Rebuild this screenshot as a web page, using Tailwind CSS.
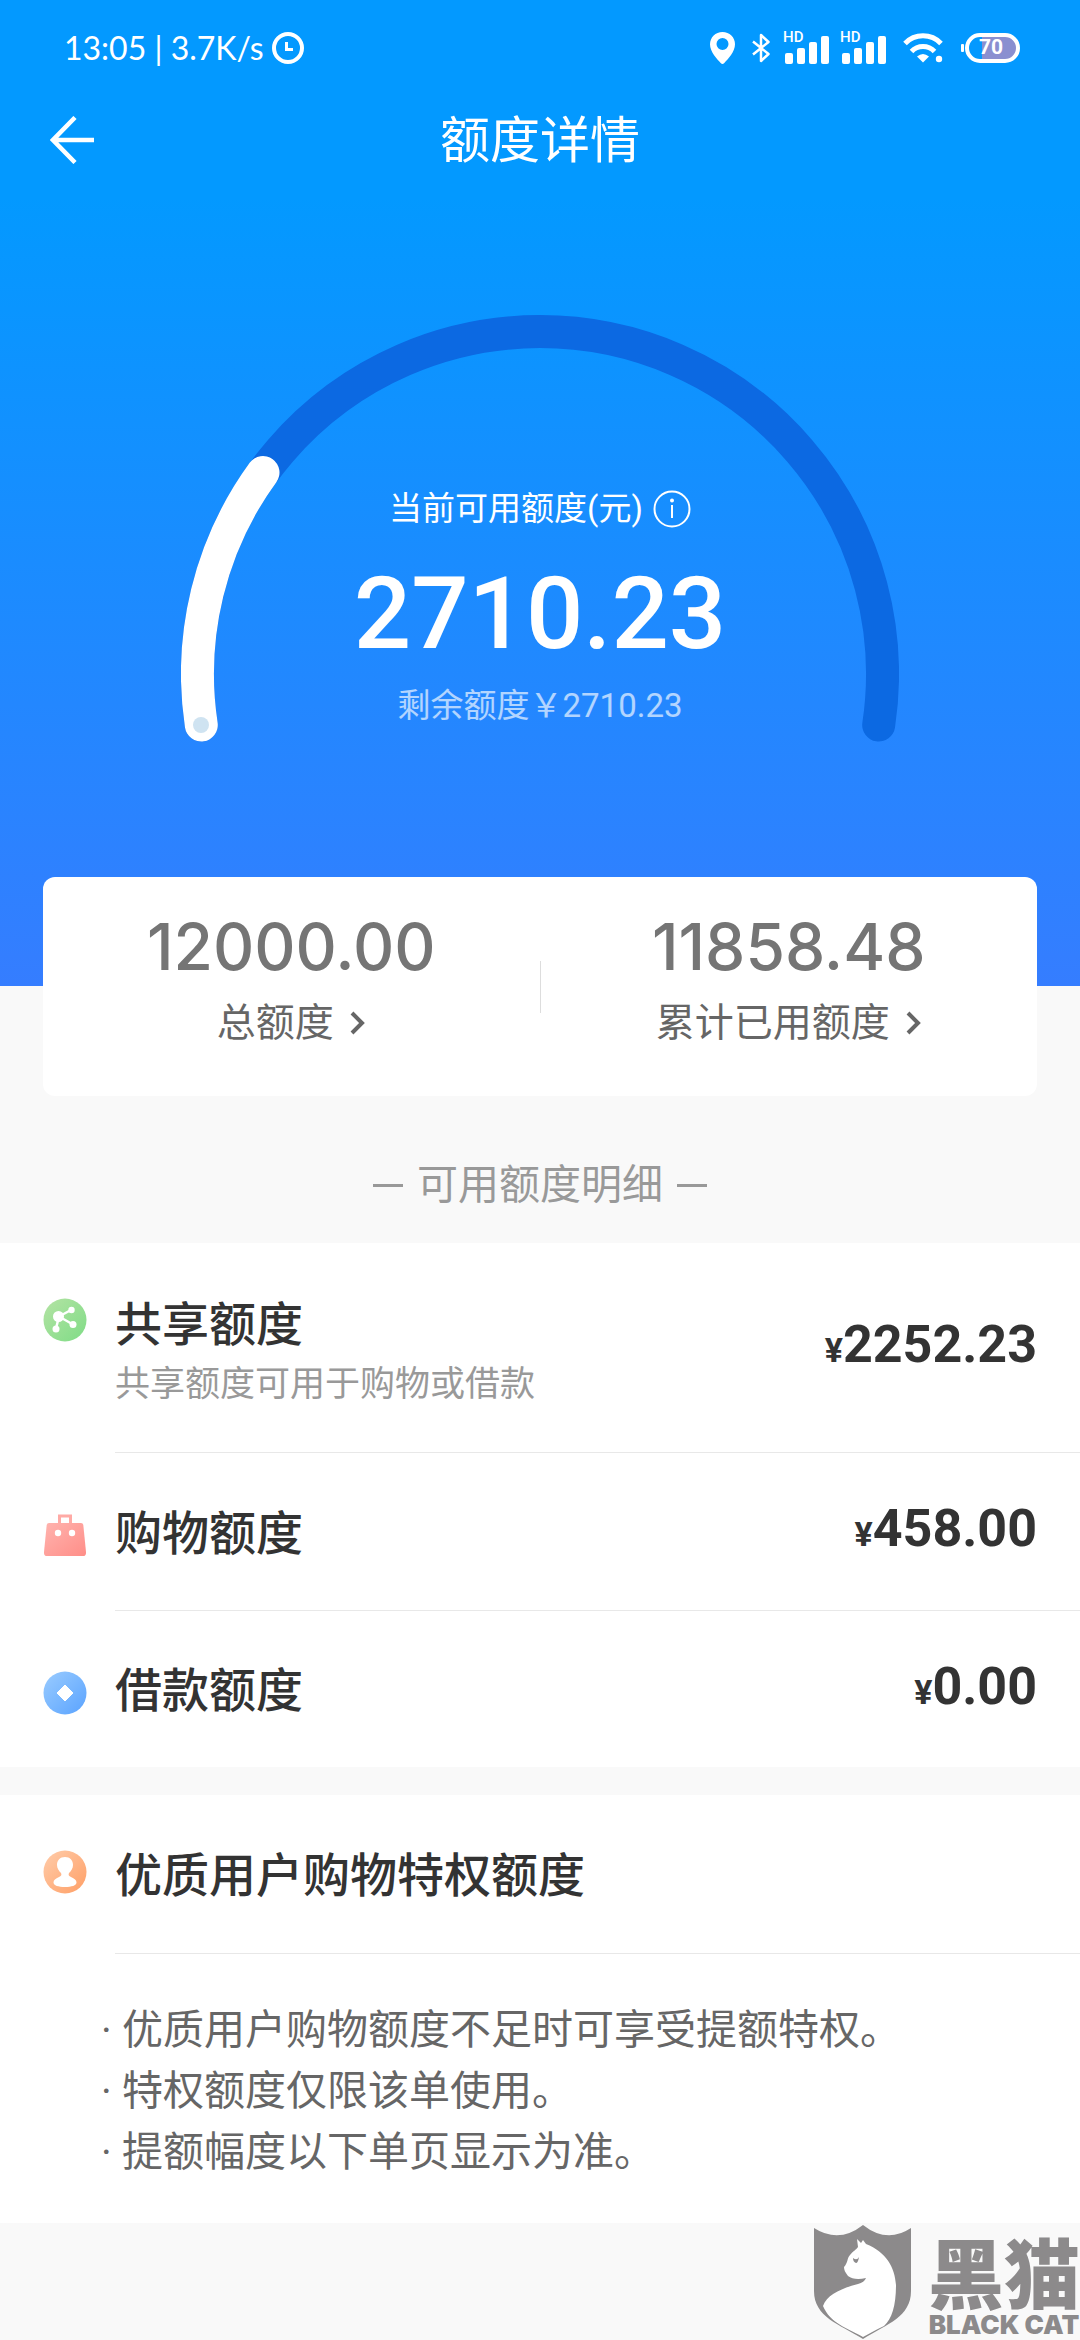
<!DOCTYPE html>
<html lang="zh-CN">
  <head>
    <meta charset="UTF-8" />
    <meta name="viewport" content="width=device-width, initial-scale=1.0" />
    <title>额度详情</title>
    <script src="https://cdn.jsdelivr.net/npm/@tailwindcss/browser@4"></script>
  </head>
  <body class="relative min-h-screen bg-[#f9f9f9] font-['Roboto','Noto_Sans_CJK_SC',sans-serif] text-[#333]">

    <header class="bg-linear-to-b/srgb from-[#0399ff] from-20% to-[#357dff] pb-[242px] text-white">
      <!-- 状态栏 -->
      <div class="flex h-[95px] items-center justify-between pl-16 pr-[60px]">
        <div class="flex items-center gap-2 font-['Lato',sans-serif] text-[32px] leading-none">
          <span>13:05 | 3.7K/s</span>
          <svg class="size-8" viewBox="0 0 32 32" fill="none" stroke="currentColor">
            <circle cx="16" cy="16" r="14" stroke-width="4" />
            <path d="M14.5 10v7.5H21" stroke-width="3" />
          </svg>
        </div>
        <div class="flex items-center">
          <svg class="mr-[17px] h-8 w-[25px]" viewBox="0 0 25 32" fill="currentColor">
            <path fill-rule="evenodd" d="M12.500 0C5.500 0 0 5.400 0 12.300 0 20 7 27 10.700 31a2.500 2.500 0 0 0 3.600 0C18 27 25 20 25 12.300 25 5.400 19.500 0 12.500 0zM12.500 6a6 6 0 1 1 0 12 6 6 0 0 1 0-12z" />
          </svg>
          <svg class="mr-[13px] h-[30px] w-[18px]" viewBox="0 0 18 30" fill="none" stroke="currentColor" stroke-width="2.500" stroke-linejoin="round">
            <path d="M1 8.500 16.500 21 9 28V2l7.500 7L1 21.500" />
          </svg>
          <svg class="mr-[11px] h-[42px] w-[46px]" viewBox="0 -4 46 42" fill="currentColor">
            <text x="0" y="11" font-size="15" font-weight="500">HD</text>
            <rect x="2" y="22" width="8" height="11" rx="2" />
            <rect x="14" y="17" width="8" height="16" rx="2" />
            <rect x="26" y="11" width="8" height="22" rx="2" />
            <rect x="38" y="5" width="8" height="28" rx="2" />
          </svg>
          <svg class="mr-[17px] h-[42px] w-[46px]" viewBox="0 -4 46 42" fill="currentColor">
            <text x="0" y="11" font-size="15" font-weight="500">HD</text>
            <rect x="2" y="22" width="8" height="11" rx="2" />
            <rect x="14" y="17" width="8" height="16" rx="2" />
            <rect x="26" y="11" width="8" height="22" rx="2" />
            <rect x="38" y="5" width="8" height="28" rx="2" />
          </svg>
          <svg class="mr-[18px] h-[30px] w-10" viewBox="0 0 40 30" fill="none" stroke="currentColor" stroke-width="5">
            <path d="M2 10.500a25 25 0 0 1 36 0" />
            <path d="M8.500 18.500a16 16 0 0 1 23 0" />
            <path d="M14 23.500q6-5 12 0L20 29.500z" fill="currentColor" stroke="none" />
            <circle cx="36" cy="26" r="3.200" fill="currentColor" stroke="none" />
          </svg>
          <svg class="h-[30px] w-[59px]" viewBox="0 0 59 30">
            <rect x="0" y="11" width="3" height="8" rx="1" fill="#fff" />
            <rect x="6" y="2" width="51" height="26" rx="13" fill="#0399ff" />
            <path d="M21 2h23a13 13 0 0 1 0 26H21z" fill="#8a8fd0" />
            <rect x="6" y="2" width="51" height="26" rx="13" fill="none" stroke="#fff" stroke-width="4" />
            <text x="30" y="21" font-size="21" font-weight="700" text-anchor="middle" fill="#fff">70</text>
          </svg>
        </div>
      </div>

      <!-- 标题栏 -->
      <nav class="grid h-[90px] grid-cols-[1fr_auto_1fr] items-center px-[50px]">
        <button type="button" aria-label="返回" class="w-11 cursor-pointer">
          <svg class="h-12 w-11" viewBox="0 0 44 48" fill="none" stroke="currentColor" stroke-width="4.500">
            <path d="M25 1.500 3 24l22 22.500M2.500 24H44" />
          </svg>
        </button>
        <h1 class="pt-0.5 text-[50px] leading-none">额度详情</h1>
      </nav>

      <!-- 额度仪表盘 -->
      <div class="mx-auto mt-[130px] grid w-[718px] justify-items-center">
        <svg class="col-start-1 row-start-1 h-[429px] w-[718px]" viewBox="181 315 718 429" fill="none" stroke-width="33" stroke-linecap="round">
          <path d="M201.300 725A342.500 342.500 0 1 1 878.700 725" stroke="#0c69e2" />
          <path d="M201.300 725A342.500 342.500 0 0 1 263 472.500" stroke="#fff" />
          <circle cx="201" cy="725" r="8" fill="#cfe3f1" />
        </svg>
        <div class="col-start-1 row-start-1 flex flex-col items-center pt-[173px]">
          <div class="flex items-center gap-2.5 text-[33px] leading-[42px]">
            <span>当前可用额度(元)</span>
            <button type="button" aria-label="说明" class="cursor-pointer">
              <svg class="size-[38px]" viewBox="0 0 38 38" fill="none" stroke="currentColor" stroke-width="2">
                <circle cx="19" cy="19" r="17.500" />
                <path d="M19 15v13" />
                <circle cx="19" cy="10.500" r="2" fill="currentColor" stroke="none" />
              </svg>
            </button>
          </div>
          <p class="mt-[34px] text-[101px] leading-[100px] font-medium">2710.23</p>
          <p class="mt-[21px] text-[33px] leading-[42px] text-white/65">剩余额度￥2710.23</p>
        </div>
      </div>
    </header>

    <!-- 总额度 / 已用额度 -->
    <section class="relative mx-[43px] -mt-[109px] flex h-[219px] items-center rounded-xl bg-white text-[#666]">
      <a href="#" class="flex flex-1 flex-col items-center gap-4 pb-2">
        <span class="font-['Inter',sans-serif] text-[64px] leading-[64px] font-medium text-[#757575]">12000.00</span>
        <span class="flex items-center gap-4 text-[39px] leading-[56px]">总额度
          <svg class="h-6 w-4" viewBox="0 0 16 24" fill="none" stroke="currentColor" stroke-width="4"><path d="M2 2l10 10L2 22" /></svg>
        </span>
      </a>
      <span class="h-[52px] w-px bg-[#ddd]"></span>
      <a href="#" class="flex flex-1 flex-col items-center gap-4 pb-2">
        <span class="font-['Inter',sans-serif] text-[64px] leading-[64px] font-medium text-[#757575]">11858.48</span>
        <span class="flex items-center gap-4 text-[39px] leading-[56px]">累计已用额度
          <svg class="h-6 w-4" viewBox="0 0 16 24" fill="none" stroke="currentColor" stroke-width="4"><path d="M2 2l10 10L2 22" /></svg>
        </span>
      </a>
    </section>

    <h2 class="flex h-[147px] items-center justify-center gap-[14px] pt-8 text-[41px] text-[#999]">
      <span class="h-[3px] w-[30px] bg-[#999]"></span>可用额度明细<span class="h-[3px] w-[30px] bg-[#999]"></span>
    </h2>

    <!-- 可用额度明细 -->
    <ul class="bg-white pl-[43px]">
      <li class="flex">
        <svg class="mt-[55px] mr-7 size-11 shrink-0" viewBox="0 0 44 44">
          <defs><linearGradient id="green" x1="0" y1="0" x2="1" y2="1"><stop stop-color="#b4e3a4" /><stop offset="1" stop-color="#7fdc86" /></linearGradient></defs>
          <circle cx="22" cy="22" r="21.500" fill="url(#green)" />
          <path d="M28 12 16 18.500l-3 12M16 18.500l14 8" fill="none" stroke="#fff" stroke-width="2.500" />
          <g fill="#fff"><circle cx="15.500" cy="18.500" r="5.500" /><circle cx="28.500" cy="12" r="3.200" /><circle cx="13" cy="31" r="3.500" /><circle cx="30" cy="26.500" r="3.500" /></g>
        </svg>
        <div class="flex h-[210px] flex-1 items-start justify-between border-b border-[#e8e8e8] pt-[52px] pr-[43px]">
          <div>
            <h3 class="text-[47px] leading-[60px] font-medium">共享额度</h3>
            <p class="text-[35px] leading-[60px] text-[#999]">共享额度可用于购物或借款</p>
          </div>
          <p class="pt-5 text-[52px] leading-[60px] font-bold"><span class="text-[34px]">¥</span>2252.23</p>
        </div>
      </li>
      <li class="flex">
        <svg class="mt-[60px] mr-7 size-11 shrink-0" viewBox="0 0 44 44">
          <defs><linearGradient id="red" x1="0" y1="0" x2="1" y2="1"><stop stop-color="#ffb3ae" /><stop offset="1" stop-color="#ff8e88" /></linearGradient></defs>
          <path d="M16.500 11V3h11v8" fill="none" stroke="#ffaaa5" stroke-width="3" />
          <path d="M6 10h32q2 0 2.300 2L43 39q.300 4-3 4H4q-3.300 0-3-4l2.700-27Q4 10 6 10z" fill="url(#red)" />
          <circle cx="15" cy="20" r="3.200" fill="#fff" /><circle cx="29" cy="20" r="3.200" fill="#fff" />
        </svg>
        <div class="flex h-[158px] flex-1 items-center justify-between border-b border-[#e8e8e8] pt-1 pr-[43px]">
          <h3 class="text-[47px] leading-[60px] font-medium">购物额度</h3>
          <p class="pb-1 text-[52px] leading-[60px] font-bold"><span class="text-[34px]">¥</span>458.00</p>
        </div>
      </li>
      <li class="flex">
        <svg class="mt-[60px] mr-7 size-11 shrink-0" viewBox="0 0 44 44">
          <defs><linearGradient id="blue" x1="0" y1="0" x2="1" y2="1"><stop stop-color="#9accff" /><stop offset="1" stop-color="#5aa3ff" /></linearGradient></defs>
          <circle cx="22" cy="22" r="21.500" fill="url(#blue)" />
          <path d="M22 14l8 8-8 8-8-8z" fill="#fff" stroke="#fff" stroke-linejoin="round" />
        </svg>
        <div class="flex h-[156px] flex-1 items-center justify-between pt-1 pr-[43px]">
          <h3 class="text-[47px] leading-[60px] font-medium">借款额度</h3>
          <p class="pb-1 text-[52px] leading-[60px] font-bold"><span class="text-[34px]">¥</span>0.00</p>
        </div>
      </li>
    </ul>

    <!-- 特权额度 -->
    <section class="mt-7 bg-white pb-10 pl-[43px]">
      <div class="flex">
        <svg class="mt-[55px] mr-7 size-11 shrink-0" viewBox="0 0 44 44">
          <defs><linearGradient id="orange" x1="0" y1="0" x2="1" y2="1"><stop stop-color="#ffccaa" /><stop offset="1" stop-color="#ff9f66" /></linearGradient></defs>
          <circle cx="22" cy="22" r="21.500" fill="url(#orange)" />
          <path d="M22 7c-5 0-8 3.500-8 8 0 3.500 2 6 4 8 1 2 0 3-2 4-3.500 1.500-5.500 3-5.500 5.500 0 3 5 4.500 11.500 4.500s11.500-1.500 11.500-4.500c0-2.500-2-4-5.500-5.500-2-1-3-2-2-4 2-2 4-4.500 4-8 0-4.500-3-8-8-8z" fill="#fff" />
        </svg>
        <div class="flex h-[159px] flex-1 items-center border-b border-[#e8e8e8] pt-1">
          <h3 class="text-[47px] leading-[60px] font-medium">优质用户购物特权额度</h3>
        </div>
      </div>
      <ul class="pt-[46px] pl-[58px] text-[41px] leading-[61px] text-[#666]">
        <li class="flex"><span class="w-[21px]">·</span>优质用户购物额度不足时可享受提额特权。</li>
        <li class="flex"><span class="w-[21px]">·</span>特权额度仅限该单使用。</li>
        <li class="flex"><span class="w-[21px]">·</span>提额幅度以下单页显示为准。</li>
      </ul>
    </section>

    <!-- 黑猫水印 -->
    <div class="absolute right-0 bottom-0 flex items-end gap-4 text-[#8c8a8b]">
      <svg class="h-[115px] w-[98px]" viewBox="0 0 98 115">
        <path d="M0 3Q25 19 49 0 73 19 97 3V66C97 92 73 99 49 114 25 99 0 92 0 66z" fill="currentColor" />
        <path d="M43 14l4 4 2-3 3 4C72 27 81 42 82 60c0 20-4 34-12 41-8 4-14 7-21 11C33 103 16 98 9 81c4-12 20-18 35-22 4-1 7-3 8-6-8 2-14 1-18-2-3-4-4-6-4-9 4-4 3-9 6-12 3-4 6-5 8-8z" fill="#fff" />
        <path d="M39 33q4 3 6-1-1 6-3 6-3-1-3-5z" fill="currentColor" />
      </svg>
      <div class="flex flex-col items-center gap-1 pb-0.5 font-black">
        <span class="font-['Noto_Sans_CJK_SC',sans-serif] text-[76px] leading-[76px]">黑猫</span>
        <span class="font-['Inter',sans-serif] text-[26px] leading-[26px]">BLACK CAT</span>
      </div>
    </div>
  </body>
</html>
